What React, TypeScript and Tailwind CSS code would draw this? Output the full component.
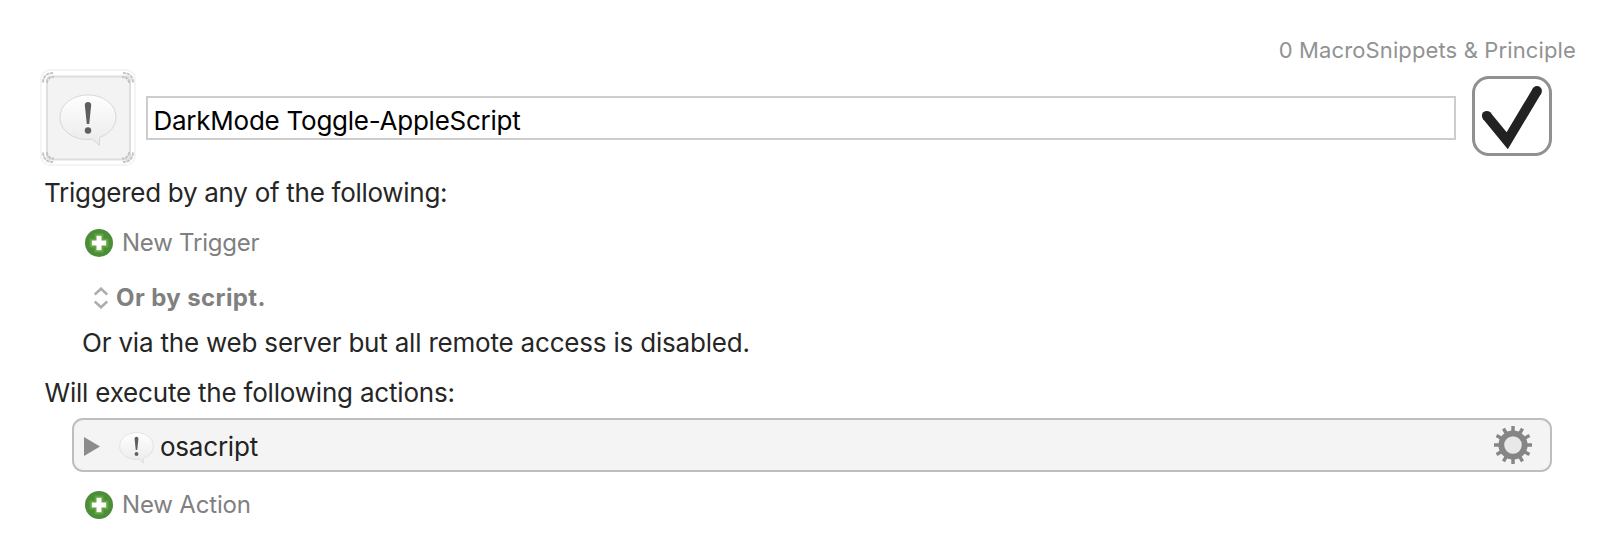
type IconProps = { className?: string };

function Bubble({ className }: IconProps) {
  return (
    <svg className={className} viewBox="0 0 58 53" fill="none">
      <defs>
        <linearGradient id="bubble" x1="0" y1="0" x2="0" y2="1">
          <stop offset="0" stopColor="#ffffff" />
          <stop offset="1" stopColor="#eaeaea" />
        </linearGradient>
      </defs>
      <path
        d="M29 1C13.500 1 1 10.700 1 23.500S13.500 45.500 29 45.500C30.500 45.500 32 45.400 33.500 45.200L40.500 51.500V43.500C50 40 57 32.500 57 23.500C57 10.700 44.500 1 29 1Z"
        fill="url(#bubble)"
        stroke="#d2d2d2"
        strokeWidth="0.9"
      />
      <path d="M25.800 11Q26 8 29 8T32.200 11L30.200 30H27.800Z" fill="#5f5f5f" />
      <circle cx="29" cy="36.500" r="3.200" fill="#5f5f5f" />
    </svg>
  );
}

function MacroFrame() {
  return (
    <svg className="absolute inset-0 h-[97px] w-24" viewBox="0 0 96 97" fill="none">
      <rect x="1" y="1" width="94" height="95" rx="9" fill="#fff" stroke="#f4f4f4" strokeWidth="2" />
      <rect x="7" y="7.500" width="83" height="83" rx="4" fill="#f3f3f3" stroke="#dedede" strokeWidth="2" />
      <g stroke="#c4c4c4" strokeWidth="2" strokeDasharray="3.500 0.800">
        <path d="M3 13.500Q3.500 4 13 4M6.800 14Q7.500 8 14 8" />
        <path d="M93 13.500Q92.500 4 83 4M89.200 14Q88.500 8 82 8" />
        <path d="M3 83.500Q3.500 93 13 93M6.800 83Q7.500 89.500 14 89.500" />
        <path d="M93 83.500Q92.500 93 83 93M89.200 83Q88.500 89.500 82 89.500" />
      </g>
    </svg>
  );
}

function Plus() {
  return (
    <svg className="size-7 shrink-0" viewBox="0 0 28 28">
      <circle cx="14" cy="14" r="14" fill="#4c8d39" />
      <path d="M9.500 4.500H18.500V9.500H23.500V18.500H18.500V23.500H9.500V18.500H4.500V9.500H9.500Z" fill="#62a43f" />
      <path d="M11.500 6.800H16.500V11.500H21.200V16.500H16.500V21.200H11.500V16.500H6.800V11.500H11.500Z" fill="#fff" />
    </svg>
  );
}

function Gear() {
  return (
    <svg className="size-[38px]" viewBox="-19 -19 38 38">
      {[0, 30, 60, 90, 120, 150].map((a) => (
        <path key={a} d="M0 -18.200V18.200" stroke="#858585" strokeWidth="3.600" strokeLinecap="square" strokeLinejoin="round" transform={`rotate(${a}) scale(0.95)`} />
      ))}
      <circle r="11.700" fill="#e8e8e8" stroke="#858585" strokeWidth="5.800" />
    </svg>
  );
}

function AddRow({ label, spacing }: { label: string; spacing: string }) {
  return (
    <div className="ml-[85px] flex h-[29px] items-end gap-[9px] text-[24px] leading-[29px] text-[#808080]">
      <Plus />
      <span className={spacing}>{label}</span>
    </div>
  );
}

export default function App() {
  return (
    <div className="h-[560px] w-[1616px] overflow-hidden bg-white pt-9 font-['Inter',sans-serif] text-[26px] leading-[33px] text-[#262626]">
      <div className="pr-10 text-right text-[22px] leading-7 tracking-[0.13px] text-[#929292]">
        0 MacroSnippets &amp; Principle
      </div>

      <div className="mt-[5px] ml-10 flex h-[97px] items-start">
        <div className="relative h-[97px] w-24">
          <MacroFrame />
          <Bubble className="absolute top-[25px] left-[18.500px] h-[53px] w-[58px]" />
        </div>
        <div className="mt-[27px] ml-2.5 h-11 w-[1310px] border-2 border-[#cdcdcd] pt-[6px] pl-[5.500px] tracking-[-0.25px] text-black">
          DarkMode Toggle-AppleScript
        </div>
        <div className="mt-[7px] ml-4 size-20 rounded-[17px] border-[3px] border-[#909090]">
          <svg className="size-[74px]" viewBox="3 3 74 74" fill="none">
            <circle cx="14.800" cy="39.800" r="4.900" fill="#222" />
            <circle cx="65" cy="15" r="4.900" fill="#222" />
            <path d="M14.800 39.800L35.200 64.700L65 15" stroke="#222" strokeWidth="9.800" strokeLinejoin="miter" />
          </svg>
        </div>
      </div>

      <div className="mt-2.5 ml-[44px] tracking-[-0.28px]">Triggered by any of the following:</div>

      <div className="mt-[19px]">
        <AddRow label="New Trigger" spacing="tracking-[-0.24px]" />
      </div>

      <div className="mt-[26px] ml-[94px] flex h-[29px] items-center gap-2 text-[24px] leading-[29px] font-bold text-[#808080]">
        <svg className="h-[22px] w-3.5" viewBox="0 0 14 22" fill="none" stroke="#adadad" strokeWidth="2.600">
          <path d="M0.700 7.500L7 1.700L13.300 7.500M0.700 14.500L7 20.300L13.300 14.500" />
        </svg>
        <span className="tracking-[0.4px]">Or by script.</span>
      </div>

      <div className="mt-[14px] ml-[82px] tracking-[-0.2px]">Or via the web server but all remote access is disabled.</div>
      <div className="mt-[17px] ml-[44.500px] tracking-[-0.2px]">Will execute the following actions:</div>

      <div className="mt-[9px] ml-[72px] flex h-[54px] w-[1480px] items-center rounded-[11px] border-2 border-[#bebebe] bg-[#f4f4f4]">
        <svg className="mt-[3px] ml-2.5 h-[19px] w-4" viewBox="0 0 16 19">
          <path d="M0 0V19L16 9.500Z" fill="#8c8c8c" />
        </svg>
        <Bubble className="mt-[5px] ml-[18.500px] h-8 w-[35px]" />
        <span className="mt-[3px] ml-[6.500px] grow tracking-[-0.22px] text-[#222]">osacript</span>
        <div className="mr-[18px]">
          <Gear />
        </div>
      </div>

      <div className="mt-[18px]">
        <AddRow label="New Action" spacing="tracking-[-0.17px]" />
      </div>
    </div>
  );
}
